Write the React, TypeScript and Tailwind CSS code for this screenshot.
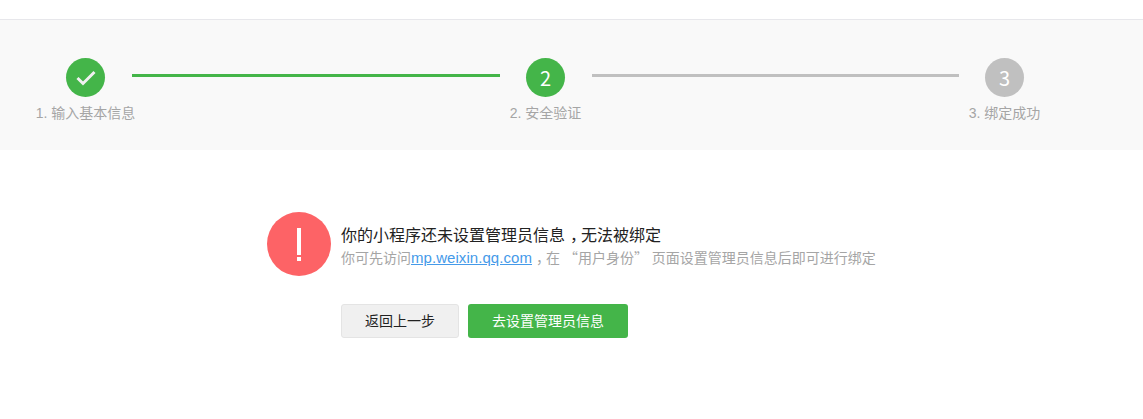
import React from 'react';

const FONT = "font-['Liberation_Sans','Noto_Sans_CJK_SC',sans-serif]";
// TC cut gives the full-width quotes seen in the reference
const QUOTE = "font-['Noto_Sans_CJK_TC',sans-serif]";

const steps = [
  { label: '1. 输入基本信息', done: true, active: true },
  { label: '2. 安全验证', done: false, active: true },
  { label: '3. 绑定成功', done: false, active: false },
];

const Step: React.FC<{ index: number; label: string; done: boolean; active: boolean }> = ({ index, label, done, active }) => (
  <div className="flex w-[39px] shrink-0 flex-col items-center">
    <div className={`flex h-[39px] w-[39px] items-center justify-center rounded-full font-['Noto_Sans_CJK_SC',sans-serif] text-[20px] font-normal text-white ${active ? 'bg-[#44b549]' : 'bg-[#c0c0c0]'}`}>
      {done ? (
        <svg width="20" height="17" viewBox="0 0 20 17" fill="none">
          <path d="M1.5 9 L7 14.5 L18.5 3" stroke="#f0f0f0" strokeWidth="3" />
        </svg>
      ) : (
        index + 1
      )}
    </div>
    <span className="mt-[6px] whitespace-nowrap text-[14px] leading-[20px] text-[#a5a5a5]">{label}</span>
  </div>
);

const App: React.FC = () => {
  return (
    <div className={`h-[419px] w-[1143px] overflow-hidden bg-white ${FONT}`}>
      <div className="mt-[19px] h-[131px] border-t border-[#e7e7eb] bg-[#f9f9f9] pl-[66px] pt-[38px]">
        <div className="flex items-start">
          <Step index={0} {...steps[0]} />
          <div className="ml-[27px] mt-[16px] h-[3px] w-[368px] bg-[#44b549]" />
          <div className="ml-[26px]">
            <Step index={1} {...steps[1]} />
          </div>
          <div className="ml-[27px] mt-[16px] h-[3px] w-[367px] bg-[#c0c0c0]" />
          <div className="ml-[26px]">
            <Step index={2} {...steps[2]} />
          </div>
        </div>
      </div>

      <div className="pl-[267px] pt-[62px]">
        <div className="flex items-start gap-[10px]">
          <div className="flex h-[64px] w-[64px] shrink-0 flex-col items-center justify-center rounded-full bg-[#fd6366]">
            <div className="h-[27px] w-[4px] bg-white" />
            <div className="mt-[2px] h-[4px] w-[4px] bg-white" />
          </div>
          <div className="pt-[13px]">
            <h3 className="text-[16px] font-normal leading-[22px] text-[#222]">
              你的小程序还未设置管理员信息<span className="ml-[5px] tracking-[-5px]">，</span>无法被绑定
            </h3>
            <p className="h-[20px] whitespace-nowrap text-[14px] leading-[20px] text-[#a5a5a5]">
              你可先访问
              <a href="#" className="text-[15px] tracking-[0.06px] text-[#459ae9] underline">mp.weixin.qq.com</a>
              <span className="ml-[4px] tracking-[-4px]">，</span>在 <span className={QUOTE}>“</span>用户身份<span className={QUOTE}>”</span> 页面设置管理员信息后即可进行绑定
            </p>
          </div>
        </div>

        <div className="mt-[28px] flex gap-[9px] pl-[74px]">
          <button className="h-[34px] w-[118px] rounded-[3px] border border-[#e4e4e4] bg-[#f0f0f0] text-[14px] text-[#222]">返回上一步</button>
          <button className="h-[34px] w-[160px] rounded-[3px] bg-[#44b549] text-[14px] text-white">去设置管理员信息</button>
        </div>
      </div>
    </div>
  );
};

export default App;
